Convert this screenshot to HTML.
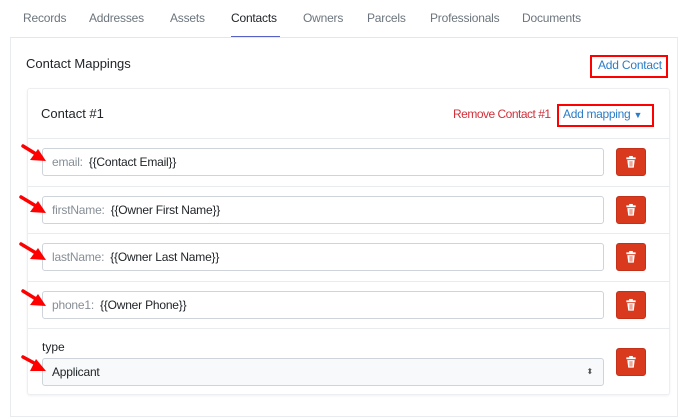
<!DOCTYPE html>
<html><head><meta charset="utf-8"><style>
*{box-sizing:border-box;margin:0;padding:0}
body{width:688px;height:407px;background:#fff;font-family:"Liberation Sans",sans-serif;font-size:12px;color:#212529;position:relative;overflow:hidden}
.a{position:absolute}
.tab{position:absolute;top:11px;font-size:12px;color:#6c757d;letter-spacing:-0.2px}
.inp{position:absolute;left:42px;width:562px;height:28px;border:1px solid #ced4da;border-radius:3px;background:#fff;padding-left:9px;line-height:26px;font-size:12px;letter-spacing:-0.2px}
.inp .k{color:#868e96;margin-right:6px}
.tr{position:absolute;left:616px;width:30px;height:28px;background:#d9391c;border-radius:3px;border:1px solid #c4301a}
.line{position:absolute;left:28px;width:642px;height:1px;background:#e9ecef}
</style></head><body>
<span class="tab" style="left:23px">Records</span>
<span class="tab" style="left:89px">Addresses</span>
<span class="tab" style="left:170px">Assets</span>
<span class="tab" style="left:231px;color:#212529">Contacts</span>
<span class="tab" style="left:303px">Owners</span>
<span class="tab" style="left:367px">Parcels</span>
<span class="tab" style="left:430px">Professionals</span>
<span class="tab" style="left:522px">Documents</span>
<div class="a" style="left:231px;top:36px;width:49px;height:2px;background:#5763c4"></div>
<div class="a" style="left:10px;top:37px;width:668px;height:380px;border:1px solid #e9ecef;border-top:1px solid #e4e6ea"></div>
<div class="a" style="left:26px;top:56px;font-size:13px">Contact Mappings</div>
<div class="a" style="left:590px;top:55px;width:78px;height:23px;border:2px solid #f00"></div>
<div class="a" style="left:598px;top:58px;color:#2a7dc7;letter-spacing:-0.2px">Add Contact</div>
<div class="a" style="left:27px;top:88px;width:643px;height:307px;border:1px solid #eceef1;border-radius:3px;box-shadow:0 1px 2px rgba(0,0,0,.06)"></div>
<div class="a" style="left:41px;top:106px;font-size:13px">Contact #1</div>
<div class="a" style="left:453px;top:107px;color:#d0313b;letter-spacing:-0.5px">Remove Contact #1</div>
<div class="a" style="left:557px;top:104px;width:97px;height:23px;border:2px solid #f00"></div>
<div class="a" style="left:563px;top:107px;color:#2a7dc7;letter-spacing:-0.3px">Add mapping <span style="font-size:9px">▼</span></div>
<div class="line" style="top:138px"></div>
<div class="line" style="top:186px"></div>
<div class="line" style="top:233px"></div>
<div class="line" style="top:281px"></div>
<div class="line" style="top:328px"></div>
<div class="inp" style="top:148px"><span class="k">email:</span>{{Contact Email}}</div>
<div class="inp" style="top:196px"><span class="k">firstName:</span>{{Owner First Name}}</div>
<div class="inp" style="top:243px"><span class="k">lastName:</span>{{Owner Last Name}}</div>
<div class="inp" style="top:291px"><span class="k">phone1:</span>{{Owner Phone}}</div>
<div class="a" style="left:42px;top:340px">type</div>
<div class="inp" style="top:358px;background:#f8f9fa">Applicant<span style="position:absolute;right:10px;top:0;font-size:8px;color:#555">⬍</span></div>
<svg class="a" style="left:0;top:0" width="688" height="407">
<defs><symbol id="t" viewBox="0 0 30 28"><rect x="10" y="9" width="10" height="2" fill="#fff"/><rect x="13" y="7.5" width="4" height="2" fill="#fff"/><path d="M11 12h8l-1 8h-6z" fill="#fff"/><path d="M14 13v6M16 13v6" stroke="#d9391c" stroke-width="0.8"/></symbol></defs>
<g fill="#f00" stroke="#f00" stroke-width="3.5" stroke-linecap="round">
<line x1="23" y1="146" x2="36" y2="154"/><polygon points="46,161 30,160 38,149" stroke-width="0"/>
<line x1="21" y1="197" x2="36" y2="206"/><polygon points="46,213 30,212 38,201" stroke-width="0"/>
<line x1="21" y1="244" x2="36" y2="253"/><polygon points="46,260 30,259 38,248" stroke-width="0"/>
<line x1="23" y1="291" x2="36" y2="299"/><polygon points="46,306 30,305 38,294" stroke-width="0"/>
<line x1="23" y1="357" x2="36" y2="364"/><polygon points="46,371 30,371 36,359" stroke-width="0"/>
</g>
</svg>
<div class="tr" style="top:148px"><svg width="28" height="26"><use href="#t"/></svg></div>
<div class="tr" style="top:196px"><svg width="28" height="26"><use href="#t"/></svg></div>
<div class="tr" style="top:243px"><svg width="28" height="26"><use href="#t"/></svg></div>
<div class="tr" style="top:291px"><svg width="28" height="26"><use href="#t"/></svg></div>
<div class="tr" style="top:348px"><svg width="28" height="26"><use href="#t"/></svg></div>
</body></html>
